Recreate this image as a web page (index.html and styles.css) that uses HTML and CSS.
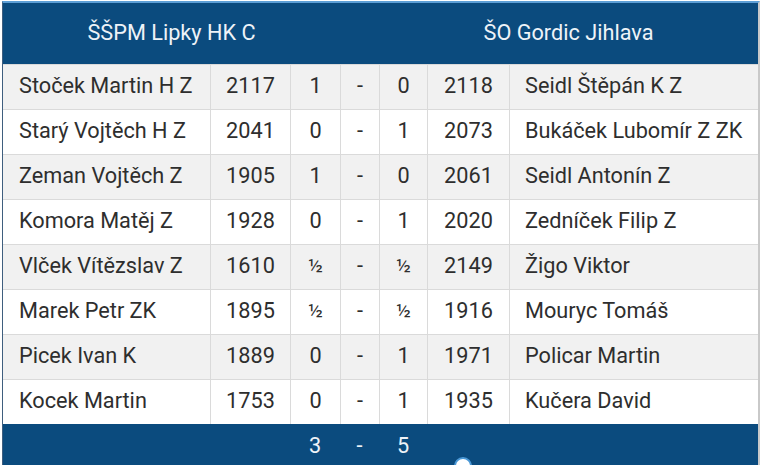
FILE: index.html
```html
<!DOCTYPE html>
<html lang="cs">
<head>
<meta charset="utf-8">
<title>Zápas</title>
<link rel="stylesheet" href="styles.css">
</head>
<body>
<div class="frame">
  <div class="row head">
    <div class="cell team left-team">ŠŠPM Lipky HK C</div>
    <div class="cell"></div>
    <div class="cell team right-team">ŠO Gordic Jihlava</div>
  </div>
  <div class="row odd">
    <div class="cell name">Stoček Martin H Z</div><div class="cell">2117</div><div class="cell">1</div><div class="cell">-</div><div class="cell">0</div><div class="cell">2118</div><div class="cell name">Seidl Štěpán K Z</div>
  </div>
  <div class="row">
    <div class="cell name">Starý Vojtěch H Z</div><div class="cell">2041</div><div class="cell">0</div><div class="cell">-</div><div class="cell">1</div><div class="cell">2073</div><div class="cell name">Bukáček Lubomír Z ZK</div>
  </div>
  <div class="row odd">
    <div class="cell name">Zeman Vojtěch Z</div><div class="cell">1905</div><div class="cell">1</div><div class="cell">-</div><div class="cell">0</div><div class="cell">2061</div><div class="cell name">Seidl Antonín Z</div>
  </div>
  <div class="row">
    <div class="cell name">Komora Matěj Z</div><div class="cell">1928</div><div class="cell">0</div><div class="cell">-</div><div class="cell">1</div><div class="cell">2020</div><div class="cell name">Zedníček Filip Z</div>
  </div>
  <div class="row odd">
    <div class="cell name">Vlček Vítězslav Z</div><div class="cell">1610</div><div class="cell half">½</div><div class="cell">-</div><div class="cell half">½</div><div class="cell">2149</div><div class="cell name">Žigo Viktor</div>
  </div>
  <div class="row">
    <div class="cell name">Marek Petr ZK</div><div class="cell">1895</div><div class="cell half">½</div><div class="cell">-</div><div class="cell half">½</div><div class="cell">1916</div><div class="cell name">Mouryc Tomáš</div>
  </div>
  <div class="row odd">
    <div class="cell name">Picek Ivan K</div><div class="cell">1889</div><div class="cell">0</div><div class="cell">-</div><div class="cell">1</div><div class="cell">1971</div><div class="cell name">Policar Martin</div>
  </div>
  <div class="row">
    <div class="cell name">Kocek Martin</div><div class="cell">1753</div><div class="cell">0</div><div class="cell">-</div><div class="cell">1</div><div class="cell">1935</div><div class="cell name">Kučera David</div>
  </div>
  <div class="row foot">
    <div class="cell"></div><div class="cell"></div><div class="cell">3</div><div class="cell">-</div><div class="cell">5</div><div class="cell"></div><div class="cell"></div>
  </div>
</div>
<div class="handle"></div>
</body>
</html>
```

FILE: styles.css
```css
html, body {
  margin: 0;
  padding: 0;
  background: #ffffff;
}

body {
  font-family: Roboto, "Noto Sans", "Liberation Sans", sans-serif;
  font-size: 21.7px;
  color: #2e2e2e;
  position: relative;
  width: 762px;
  height: 465px;
  overflow: hidden;
}

.frame {
  margin: 1px 0 0 2px;
  width: 755px;
  border-top: 2px solid #5d9fd6;
  border-left: 1px solid #3f5e7e;
  border-right: 2px solid #c9c9c9;
}

.row {
  display: grid;
  grid-template-columns: 207px 80px 50px 39px 48px 82px 249px;
  height: 45px;
  box-sizing: border-box;
  border-top: 1px solid #dadada;
  background: #ffffff;
}

.row.odd {
  background: #f1f1f1;
}

.cell {
  display: flex;
  align-items: center;
  justify-content: center;
  box-sizing: border-box;
  padding-bottom: 3px;
  border-left: 1px solid #dadada;
  white-space: nowrap;
}

.row .cell:first-child {
  border-left: none;
}

.cell.name {
  justify-content: flex-start;
  padding-left: 16px;
}

.row .cell.name:last-child {
  padding-left: 15px;
}

.cell.half {
  font-size: 19px;
}

.row.head {
  height: 61px;
  border-top: none;
  background: #0b4b7e;
  grid-template-columns: 337px 39px 379px;
  color: #eef3f8;
}

.row.head .cell {
  border-left: none;
  padding-bottom: 2px;
}

.row.foot {
  background: #0b4b7e;
  border-top: none;
  color: #eef3f8;
}

.row.foot .cell {
  border-left: none;
}

.handle {
  position: absolute;
  left: 454px;
  top: 457px;
  width: 14px;
  height: 14px;
  border: 2px solid #4a98d6;
  border-radius: 50%;
  background: #ffffff;
}
```
